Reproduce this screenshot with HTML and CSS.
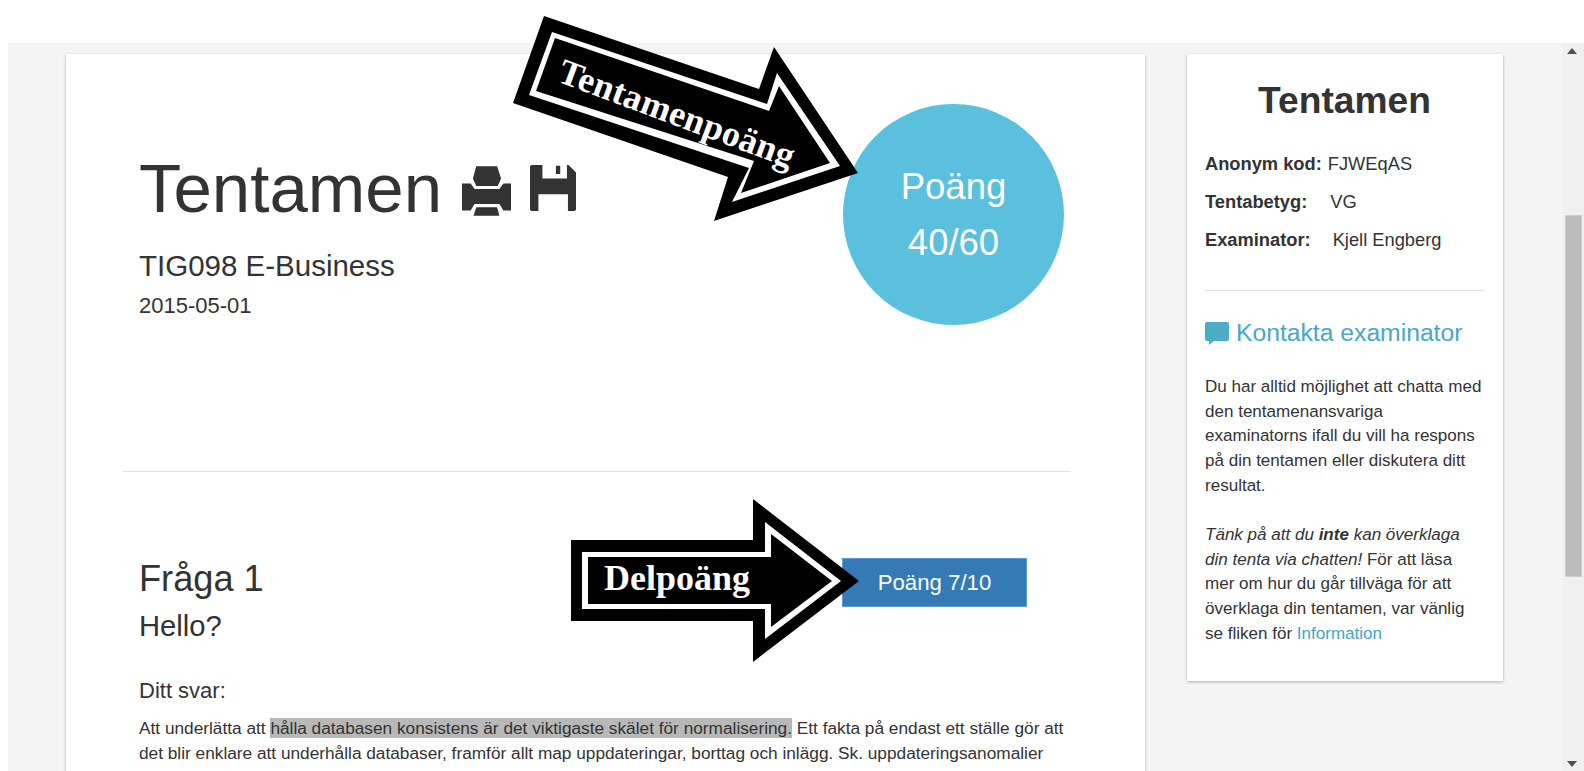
FILE: index.html
```html
<!DOCTYPE html>
<html lang="sv">
<head>
<meta charset="utf-8">
<title>Tentamen</title>
<link rel="stylesheet" href="styles.css">
</head>
<body>
<div class="page">
  <div class="topbar"></div>
  <div class="shell">
    <div class="workspace">
      <main class="card main-card">
        <section class="exam-head">
          <div class="exam-title">
            <div class="title-row">
              <h1>Tentamen</h1>
              <svg class="icon-print" viewBox="0 0 148 153"><path d="M43 3H106L118 40 108 63H43L33 40ZM0 55H26L38 72H113L125 55H148V137H125L113 117H38L26 137H0ZM43 127H106L113 153H35Z"/></svg>
              <svg class="icon-save" viewBox="0 0 137 137"><path d="M4 0H37V40H110V0H115L137 22V133L133 137H113V87H25V137H4L0 133V4ZM77 2H90V27H77Z"/></svg>
            </div>
            <h2>TIG098 E-Business</h2>
            <div class="exam-date">2015-05-01</div>
          </div>
          <div class="score-circle"><span>Poäng</span><span>40/60</span></div>
        </section>
        <hr class="main-rule">
        <section class="question">
          <div class="question-head">
            <div>
              <h3>Fråga 1</h3>
              <h4>Hello?</h4>
            </div>
            <div class="part-score">Poäng 7/10</div>
          </div>
          <h5>Ditt svar:</h5>
          <p>Att underlätta att <mark>hålla databasen konsistens är det viktigaste skälet för normalisering.</mark> Ett fakta på endast ett ställe gör att det blir enklare att underhålla databaser, framför allt map uppdateringar, borttag och inlägg. Sk. uppdateringsanomalier</p>
        </section>
      </main>
      <aside class="card side-card">
        <h2 class="side-title">Tentamen</h2>
        <dl class="facts">
          <div class="fact"><dt>Anonym kod:</dt><dd class="fact-a">FJWEqAS</dd></div>
          <div class="fact"><dt>Tentabetyg:</dt><dd class="fact-b">VG</dd></div>
          <div class="fact"><dt>Examinator:</dt><dd class="fact-c">Kjell Engberg</dd></div>
        </dl>
        <hr class="side-rule">
        <div class="contact-head">
          <svg class="icon-chat" viewBox="0 0 24 23"><path d="M2 0H22A2 2 0 0 1 24 2V17A2 2 0 0 1 22 19H9L4 23V19H2A2 2 0 0 1 0 17V2A2 2 0 0 1 2 0Z"/></svg>
          <span>Kontakta examinator</span>
        </div>
        <p class="side-text">Du har alltid möjlighet att chatta med den tentamenansvariga examinatorns ifall du vill ha respons på din tentamen eller diskutera ditt resultat.</p>
        <p class="side-text"><em>Tänk på att du <strong>inte</strong> kan överklaga din tenta via chatten!</em> För att läsa mer om hur du går tillväga för att överklaga din tentamen, var vänlig se fliken för <a href="#">Information</a></p>
      </aside>
    </div>
    <div class="scrollbar">
      <div class="arrow-up"></div>
      <div class="thumb"></div>
      <div class="arrow-down"></div>
    </div>
  </div>
  <svg class="overlay" viewBox="0 0 1584 771">
    <polygon class="ar-black" points="544,16 759,89 774,47 858,173 714,221 728,177 513,103"/>
    <polygon class="ar-white" points="552,32 767,104 777,73 840,166 732,202 749,168 529,95"/>
    <polygon class="ar-black" points="555,38 769,111 779,86 830,163 741,193 754,161 536,91"/>
    <text class="ar-text ar-spaced" transform="translate(556 81) rotate(20.5)">Tentamenpoäng</text>
    <polygon class="ar-black" points="571,540 753,540 753,499 859,581 753,662 753,621 571,621"/>
    <polygon class="ar-white" points="582,552 765,552 765,522 841,581 765,639 765,609 582,609"/>
    <polygon class="ar-black" points="588,557 771,557 771,534 832,581 771,627 771,604 588,604"/>
    <text class="ar-text" x="604" y="590">Delpoäng</text>
  </svg>
</div>
</body>
</html>
```
FILE: styles.css
```css
* { box-sizing: border-box; }
html, body { margin: 0; padding: 0; }
body { background: #fff; font-family: "Liberation Sans", Arial, sans-serif; color: #333; }
.page { position: relative; width: 1584px; height: 771px; overflow: hidden; display: flex; flex-direction: column; }
.topbar { height: 43px; flex: none; background: #fff; }
.shell { flex: 1; min-height: 0; display: flex; padding-left: 8px; }
.workspace { flex: 1; min-width: 0; background: #f4f4f4; display: flex; align-items: flex-start; gap: 42px; padding: 11px 0 0 58px; }
.card { background: #fff; box-shadow: 0 1px 3px rgba(0,0,0,.28); flex: none; }
.main-card { width: 1079px; padding-bottom: 60px; }
.exam-head { height: 417px; display: flex; justify-content: space-between; padding: 50px 81px 0 73px; }
.exam-title { padding-top: 47px; }
.title-row { display: flex; align-items: flex-start; }
h1 { margin: 0; font-size: 69px; line-height: 76px; font-weight: 400; }
.icon-print { width: 49px; height: 51px; margin: 14px 0 0 20px; fill: #333; }
.icon-save { width: 46px; height: 46px; margin: 14px 0 0 19px; fill: #333; }
h2 { margin: 0; font-weight: 400; }
.exam-title h2 { font-size: 29.5px; line-height: 34px; margin-top: 22px; }
.exam-date { font-size: 22px; line-height: 26px; margin-top: 10px; }
.score-circle { width: 221px; height: 221px; margin-right: 0; border-radius: 50%; background: #5bc0de; color: #fff; font-size: 36.5px; display: flex; flex-direction: column; align-items: center; justify-content: center; line-height: 56px; }
.main-rule { margin: 0 0 0 56px; width: 949px; height: 1px; border: 0; background: #e2e2e2; }
.question { padding: 0 74px 0 73px; }
.question-head { display: flex; justify-content: space-between; align-items: flex-start; padding: 86px 44px 0 0; }
h3 { margin: 0; font-size: 36.2px; line-height: 42px; font-weight: 400; }
h4 { margin: 9px 0 0; font-size: 29.2px; line-height: 34px; font-weight: 400; }
.part-score { width: 185px; height: 49px; background: #337ab7; border: 1px solid #5f9ad0; color: #fff; font-size: 22.2px; display: flex; align-items: center; justify-content: center; }
h5 { margin: 35px 0 0; font-size: 22px; line-height: 26px; font-weight: 400; }
.question p { margin: 12px 0 0; font-size: 17.25px; line-height: 24.6px; }
mark { background: #b8b8b8; color: inherit; }
.side-card { width: 316px; height: 627px; padding: 21px 19px 0 18px; }
.side-title { font-size: 37.2px; line-height: 50px; font-weight: 700; text-align: center; }
.facts { margin: 26px 0 0; font-size: 18.3px; line-height: 26px; }
.fact { display: flex; margin-bottom: 12px; }
dt { font-weight: 700; }
dd { margin: 0; }
.fact-a { margin-left: 6px; }
.fact-b { margin-left: 23px; }
.fact-c { margin-left: 22px; }
.side-rule { margin: 37px 0 0; height: 1px; border: 0; background: #e2e2e2; }
.contact-head { display: flex; align-items: center; margin-top: 26px; color: #46a9c2; font-size: 24.7px; line-height: 32px; }
.icon-chat { width: 24px; height: 23px; margin-right: 7px; fill: #4bacc6; flex: none; }
.side-text { margin: 24.5px 0 0; font-size: 17.05px; line-height: 24.67px; }
.contact-head + .side-text { margin-top: 26px; }
a { color: #3aa8c1; text-decoration: none; }
.scrollbar { width: 22px; flex: none; background: #f0f0f0; display: flex; flex-direction: column; align-items: center; padding: 5px 0 4px; }
.arrow-up { width: 0; height: 0; border-left: 5px solid transparent; border-right: 5px solid transparent; border-bottom: 6px solid #505050; margin-left: -2px; flex: none; }
.thumb { width: 17px; height: 362px; background: #bcbcbc; border: 1px solid #cdcdcd; margin: 161px 0 0; flex: none; }
.arrow-down { width: 0; height: 0; border-left: 5px solid transparent; border-right: 5px solid transparent; border-top: 6px solid #505050; margin-top: auto; margin-left: -2px; flex: none; }
.overlay { position: absolute; left: 0; top: 0; width: 1584px; height: 771px; pointer-events: none; }
.ar-black { fill: #000; }
.ar-white { fill: #fff; }
.ar-text { fill: #fff; font-family: "Liberation Serif", "Times New Roman", serif; font-size: 36px; font-weight: 700; }
.ar-spaced { letter-spacing: .2px; }
```
